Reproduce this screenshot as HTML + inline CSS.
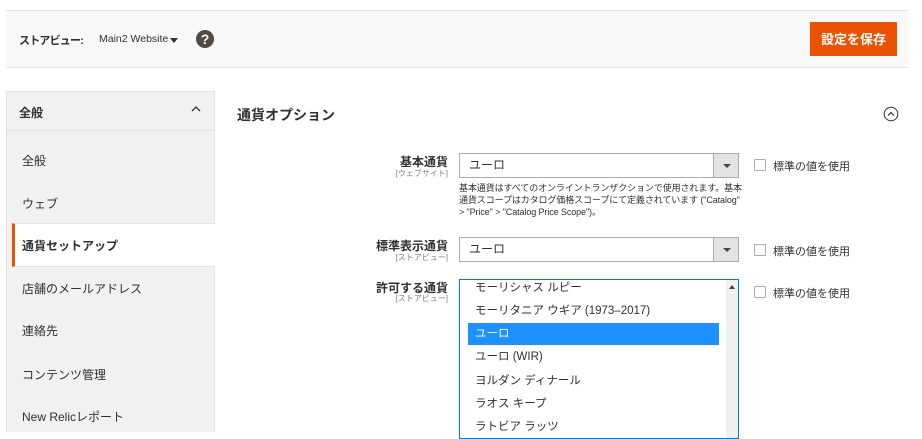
<!DOCTYPE html>
<html><head><meta charset="utf-8"><style>
*{box-sizing:border-box;margin:0;padding:0}
body{width:922px;height:432px;overflow:hidden;background:#fff;font-family:"Liberation Sans","Noto Sans CJK JP",sans-serif;color:#303030;position:relative}
.abs{position:absolute;white-space:nowrap}
.top{left:6px;top:10px;width:902px;height:58px;background:#f8f8f8;border-top:1px solid #e3e3e3;border-bottom:1px solid #e3e3e3}
.btn{left:810px;top:22px;width:87px;height:34px;background:#eb5202;color:#fff;font-weight:bold;font-size:13px;text-align:center;line-height:34px;border:1px solid #eb5202}
.side{left:6px;top:91px;width:209px;height:341px;background:#f1f1f1;border:1px solid #e3e3e3;border-bottom:none}
.item{position:absolute;left:16px;font-size:12px;color:#303030;white-space:nowrap}
.lbl{font-size:12px;font-weight:bold;text-align:right;right:474px;color:#303030}
.sub{font-size:8px;color:#808080;text-align:right;right:474px}
.sel{left:459px;width:280px;height:25px;border:1px solid #adadad;background:#fff;font-size:12px;padding-left:9px;line-height:23px}
.sel .ar{position:absolute;right:0;top:0;width:25px;height:23px;background:#e3e3e3;border-left:1px solid #adadad}
.sel .ar:after{content:"";position:absolute;left:9px;top:10px;border-left:4px solid transparent;border-right:4px solid transparent;border-top:4px solid #444}
.cb{left:754px;width:12px;height:12px;border:1px solid #adadad;background:#fff;border-radius:1px}
.cbt{left:773px;font-size:11px;color:#303030}
.opt{position:absolute;left:8px;width:251px;height:22px;font-size:11.5px;line-height:22px;padding-left:7px;color:#303030;white-space:nowrap}
</style></head><body>
<div class="abs top"></div>
<div class="abs" style="left:19px;top:32px;font-size:11px;font-weight:bold;color:#303030;letter-spacing:-0.8px">ストアビュー:</div>
<div class="abs" style="left:99px;top:33px;font-size:10.5px;color:#303030">Main2 Website</div>
<div class="abs" style="left:170px;top:38px;border-left:4px solid transparent;border-right:4px solid transparent;border-top:5px solid #303030"></div>
<div class="abs" style="left:196px;top:30px;width:18px;height:18px;border-radius:50%;background:#514943;color:#fff;font-weight:bold;font-size:14px;text-align:center;line-height:18px">?</div>
<div class="abs btn">設定を保存</div>

<div class="abs side"></div>
<div class="abs" style="left:6px;top:130px;width:209px;height:1px;background:#e3e3e3"></div>
<div class="abs" style="left:19px;top:104px;font-size:12px;font-weight:bold">全般</div>
<svg class="abs" style="left:190px;top:105px" width="12" height="8" viewBox="0 0 12 8"><path d="M2 6 L6 2 L10 6" fill="none" stroke="#303030" stroke-width="1.3"/></svg>
<div class="item" style="left:22px;top:152px">全般</div>
<div class="item" style="left:22px;top:195px">ウェブ</div>
<div class="abs" style="left:12px;top:223px;width:203px;height:44px;background:#fff;border-left:3px solid #eb5202;border-top:1px solid #e3e3e3;border-bottom:1px solid #e3e3e3"></div>
<div class="item" style="left:22px;top:237px;font-weight:bold">通貨セットアップ</div>
<div class="item" style="left:22px;top:280px">店舗のメールアドレス</div>
<div class="item" style="left:22px;top:322px">連絡先</div>
<div class="item" style="left:22px;top:366px">コンテンツ管理</div>
<div class="item" style="left:22px;top:408px">New Relicレポート</div>

<div class="abs" style="left:237px;top:105px;font-size:14px;font-weight:bold">通貨オプション</div>
<svg class="abs" style="left:883px;top:106px" width="16" height="16" viewBox="0 0 16 16"><circle cx="8" cy="8" r="6.8" fill="none" stroke="#303030" stroke-width="1"/><path d="M5 9.5 L8 6.5 L11 9.5" fill="none" stroke="#303030" stroke-width="1.2"/></svg>

<div class="abs lbl" style="top:153px">基本通貨</div>
<div class="abs sub" style="top:168px">[ウェブサイト]</div>
<div class="abs sel" style="top:153px">ユーロ<div class="ar"></div></div>
<div class="abs cb" style="top:159px"></div><div class="abs cbt" style="top:158px">標準の値を使用</div>
<div class="abs" style="left:459px;top:182px;width:284px;font-size:9px;line-height:12px;color:#303030;white-space:normal;letter-spacing:-0.1px">基本通貨はすべてのオンライントランザクションで使用されます。基本通貨スコープはカタログ価格スコープにて定義されています ("Catalog" &gt; "Price" &gt; "Catalog Price Scope")。</div>

<div class="abs lbl" style="top:237px">標準表示通貨</div>
<div class="abs sub" style="top:252px">[ストアビュー]</div>
<div class="abs sel" style="top:237px">ユーロ<div class="ar"></div></div>
<div class="abs cb" style="top:244px"></div><div class="abs cbt" style="top:243px">標準の値を使用</div>

<div class="abs lbl" style="top:279px">許可する通貨</div>
<div class="abs sub" style="top:293px">[ストアビュー]</div>
<div class="abs" style="left:459px;top:279px;width:280px;height:160px;border:1px solid #007bdb;background:#fff;overflow:hidden">
<div class="abs" style="right:0;top:0;width:12px;height:160px;background:#f0f0f0"></div>
<div class="abs" style="right:3px;top:5px;border-left:3px solid transparent;border-right:3px solid transparent;border-bottom:4px solid #444"></div>
<div class="opt" style="top:-3px">モーリシャス ルピー</div>
<div class="opt" style="top:20px">モーリタニア ウギア (1973–2017)</div>
<div class="opt" style="top:43px;background:#1e90ff;color:#fff">ユーロ</div>
<div class="opt" style="top:66px">ユーロ (WIR)</div>
<div class="opt" style="top:90px">ヨルダン ディナール</div>
<div class="opt" style="top:113px">ラオス キープ</div>
<div class="opt" style="top:136px">ラトビア ラッツ</div>
</div>
<div class="abs cb" style="top:286px"></div><div class="abs cbt" style="top:285px">標準の値を使用</div>
</body></html>
